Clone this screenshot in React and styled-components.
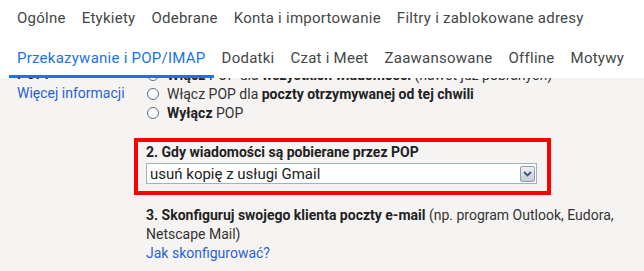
import React from "react";
import styled, { createGlobalStyle } from "styled-components";

const Global = createGlobalStyle`
  html, body { margin: 0; padding: 0; }
  body {
    width: 644px;
    height: 271px;
    overflow: hidden;
    background: #f6f4f2;
    font-family: Roboto, "Liberation Sans", Arial, sans-serif;
  }
`;

const Page = styled.div`
  display: flex;
  flex-direction: column;
  height: 271px;
  overflow: hidden;
`;

const Header = styled.header`
  background: #ffffff;
  padding: 2px 0 0 9px;
  display: flex;
  flex-direction: column;
  gap: 4px;
  flex: none;
`;

const TabRow = styled.nav`
  display: flex;
  align-items: flex-end;
`;

const Tab = styled.a`
  display: block;
  padding: 6px 8px 7px;
  line-height: 20px;
  font-size: 15px;
  letter-spacing: 0.25px;
  white-space: nowrap;
  color: ${(p) => (p.$active ? "#1a73e8" : "#444746")};
  border-bottom: 3px solid ${(p) => (p.$active ? "#1a73e8" : "transparent")};
  cursor: pointer;
`;

const Scroller = styled.div`
  flex: 1;
  overflow: hidden;
`;

const Content = styled.div`
  margin-top: -13px;
  display: grid;
  grid-template-columns: 129px 1fr;
  padding: 0 14px 0 17px;
  font-size: 14px;
  color: #333;
`;

const Label = styled.div`
  line-height: 19px;
  display: flex;
  flex-direction: column;
`;

const LabelTitle = styled.span`
  font-weight: 700;
  color: #222;
`;

const Link = styled.a`
  color: #2962d4;
  cursor: pointer;
  line-height: 19px;
`;

const Options = styled.div`
  display: flex;
  flex-direction: column;
`;

const RadioRow = styled.label`
  display: flex;
  align-items: center;
  gap: 8px;
  height: 19px;
  padding-left: 1px;
  white-space: nowrap;
`;

const Radio = styled.span`
  width: 12px;
  height: 12px;
  box-sizing: border-box;
  border-radius: 50%;
  border: 1.5px solid #5d6f86;
  background: #fbfbfb;
  flex: none;
`;

const B = styled.b`
  font-weight: 700;
  color: #222;
`;

const Section = styled.div`
  grid-column: 2;
`;

const Highlight = styled.div`
  grid-column: 2;
  margin: 16px 0 0 -12px;
  width: 417px;
  box-sizing: border-box;
  border: 4px solid #ff0000;
  padding: 0 10px 7px 8px;
`;

const Heading = styled.div`
  font-weight: 700;
  color: #222;
  line-height: 20px;
  margin-bottom: 1px;
`;

const SelectBox = styled.div`
  display: flex;
  align-items: center;
  justify-content: space-between;
  height: 21px;
  box-sizing: border-box;
  border: 1px solid #9fb3bf;
  background: #fff;
  padding: 0 1px 0 3px;
  font-size: 15px;
  color: #222;
`;

const DropButton = styled.span`
  width: 15px;
  height: 16px;
  box-sizing: border-box;
  border: 1px solid #8e9cb0;
  border-radius: 2px;
  background: linear-gradient(#eef1f6, #c4ccd9);
  display: flex;
  align-items: center;
  justify-content: center;
`;

const Setup = styled.div`
  grid-column: 2;
  margin-top: 11px;
  line-height: 19px;
  padding-left: -1px;
`;

export default function App() {
  const row1 = ["Ogólne", "Etykiety", "Odebrane", "Konta i importowanie", "Filtry i zablokowane adresy"];
  const row2 = ["Przekazywanie i POP/IMAP", "Dodatki", "Czat i Meet", "Zaawansowane", "Offline", "Motywy"];
  return (
    <Page>
      <Global />
      <Header>
        <TabRow>
          {row1.map((t) => (
            <Tab key={t}>{t}</Tab>
          ))}
        </TabRow>
        <TabRow>
          {row2.map((t, i) => (
            <Tab key={t} $active={i === 0}>
              {t}
            </Tab>
          ))}
        </TabRow>
      </Header>
      <Scroller>
        <Content>
          <Label>
            <LabelTitle>POP:</LabelTitle>
            <Link>Więcej informacji</Link>
          </Label>
          <Options>
            <RadioRow>
              <Radio />
              <span>
                <B>Włącz</B> POP dla <B>wszystkich wiadomości</B> (nawet już pobranych)
              </span>
            </RadioRow>
            <RadioRow>
              <Radio />
              <span>
                Włącz POP dla <B>poczty otrzymywanej od tej chwili</B>
              </span>
            </RadioRow>
            <RadioRow>
              <Radio />
              <span>
                <B>Wyłącz</B> POP
              </span>
            </RadioRow>
          </Options>
          <Highlight>
            <Heading>2. Gdy wiadomości są pobierane przez POP</Heading>
            <SelectBox>
              <span>usuń kopię z usługi Gmail</span>
              <DropButton>
                <svg width="9" height="6" viewBox="0 0 9 6">
                  <path d="M1 1 L4.5 4.5 L8 1" fill="none" stroke="#3d5580" strokeWidth="1.8" />
                </svg>
              </DropButton>
            </SelectBox>
          </Highlight>
          <Setup>
            <B>3. Skonfiguruj swojego klienta poczty e-mail</B> (np. program Outlook, Eudora, Netscape Mail)
            <br />
            <Link>Jak skonfigurować?</Link>
          </Setup>
        </Content>
      </Scroller>
    </Page>
  );
}
